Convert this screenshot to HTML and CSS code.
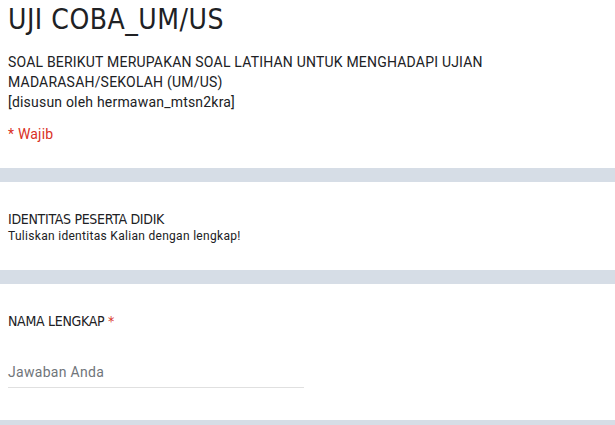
FILE: index.html
```html
<!DOCTYPE html>
<html lang="id">
<head>
    <meta charset="UTF-8">
    <meta name="viewport" content="width=device-width, initial-scale=1.0">
    <title>UJI COBA_UM/US</title>
    <link rel="stylesheet" href="styles.css">
</head>
<body>
    <div class="form">
        <div class="section header">
            <h1>UJI COBA_UM/US</h1>
            <p class="desc">SOAL BERIKUT MERUPAKAN SOAL LATIHAN UNTUK MENGHADAPI UJIAN<br>MADARASAH/SEKOLAH (UM/US)<br>[disusun oleh hermawan_mtsn2kra]</p>
            <p class="required-note">* Wajib</p>
        </div>

        <div class="section block">
            <h2>IDENTITAS PESERTA DIDIK</h2>
            <p class="hint">Tuliskan identitas Kalian dengan lengkap!</p>
        </div>

        <div class="section question">
            <h3>NAMA LENGKAP <span class="star">*</span></h3>
            <div class="answer">Jawaban Anda</div>
        </div>
    </div>
</body>
</html>
```

FILE: styles.css
```css
* {
    margin: 0;
    padding: 0;
    box-sizing: border-box;
}

body {
    background-color: #d6dde6;
    font-family: Roboto, 'Liberation Sans', Arial, sans-serif;
    color: #202124;
}

.form {
    display: flex;
    flex-direction: column;
    gap: 14px;
}

.section {
    background-color: #fff;
    padding: 0 8px;
}

.header {
    padding-top: 2px;
    height: 168px;
}

h1 {
    font-family: 'DejaVu Sans Condensed', 'DejaVu Sans', sans-serif;
    font-weight: normal;
    font-size: 28px;
    line-height: 36px;
    color: #202124;
    letter-spacing: 0.5px;
}

.desc {
    margin-top: 14px;
    font-size: 14px;
    line-height: 20px;
    letter-spacing: 0.2px;
}

.required-note {
    margin-top: 12px;
    font-size: 14px;
    line-height: 20px;
    letter-spacing: 0.2px;
    color: #d93025;
}

.block {
    height: 88px;
    padding-top: 28px;
}

h2 {
    font-family: 'DejaVu Sans Condensed', 'DejaVu Sans', sans-serif;
    font-weight: normal;
    font-size: 14px;
    line-height: 18px;
    letter-spacing: -0.3px;
}

.hint {
    font-size: 12px;
    line-height: 16px;
    letter-spacing: 0.3px;
}

.question {
    height: 136px;
    padding-top: 27px;
}

h3 {
    font-family: 'DejaVu Sans Condensed', 'DejaVu Sans', sans-serif;
    font-weight: normal;
    font-size: 14px;
    line-height: 20px;
    letter-spacing: -0.3px;
}

.star {
    color: #d93025;
}

.answer {
    margin-top: 31px;
    width: 296px;
    font-size: 14px;
    line-height: 20px;
    letter-spacing: 0.3px;
    color: #70757a;
    padding-bottom: 5px;
    border-bottom: 1px solid #e0e0e0;
}
```
